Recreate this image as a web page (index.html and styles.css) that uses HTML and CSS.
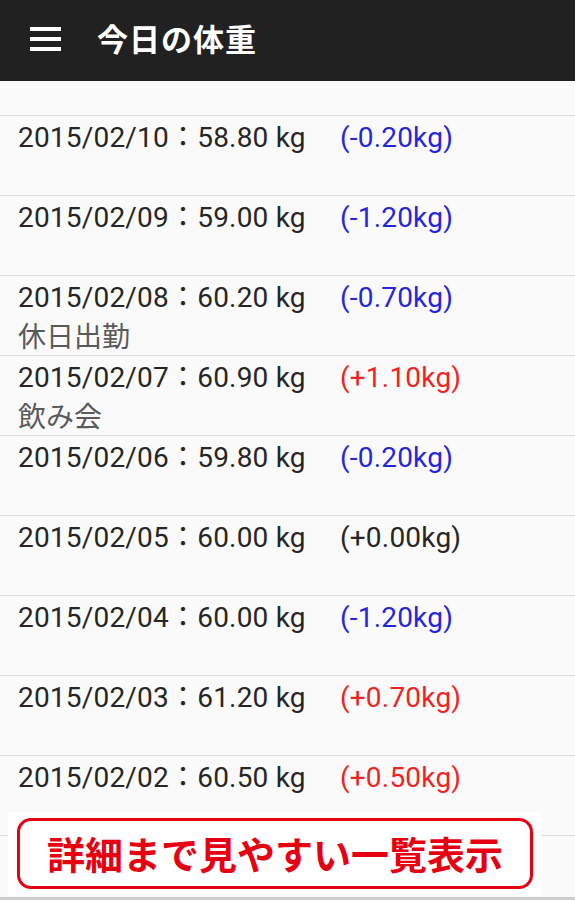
FILE: index.html
```html
<!DOCTYPE html>
<html lang="ja">
<head>
    <meta charset="UTF-8">
    <meta name="viewport" content="width=device-width, initial-scale=1.0">
    <title>今日の体重</title>
    <link rel="stylesheet" href="styles.css">
</head>
<body>
    <header class="appbar">
        <svg class="menu-icon" width="31" height="24" viewBox="0 0 31 24">
            <rect x="0" y="0" width="31" height="4" fill="#fff"/>
            <rect x="0" y="10" width="31" height="4" fill="#fff"/>
            <rect x="0" y="20" width="31" height="4" fill="#fff"/>
        </svg>
        <h1 class="title">今日の体重</h1>
    </header>

    <div class="list-top"></div>
    <ul class="weights">
        <li class="row">
            <div class="line"><span class="weight">2015/02/10：58.80 kg</span><span class="diff down">(-0.20kg)</span></div>
        </li>
        <li class="row">
            <div class="line"><span class="weight">2015/02/09：59.00 kg</span><span class="diff down">(-1.20kg)</span></div>
        </li>
        <li class="row">
            <div class="line"><span class="weight">2015/02/08：60.20 kg</span><span class="diff down">(-0.70kg)</span></div>
            <div class="memo">休日出勤</div>
        </li>
        <li class="row">
            <div class="line"><span class="weight">2015/02/07：60.90 kg</span><span class="diff up">(+1.10kg)</span></div>
            <div class="memo">飲み会</div>
        </li>
        <li class="row">
            <div class="line"><span class="weight">2015/02/06：59.80 kg</span><span class="diff down">(-0.20kg)</span></div>
        </li>
        <li class="row">
            <div class="line"><span class="weight">2015/02/05：60.00 kg</span><span class="diff">(+0.00kg)</span></div>
        </li>
        <li class="row">
            <div class="line"><span class="weight">2015/02/04：60.00 kg</span><span class="diff down">(-1.20kg)</span></div>
        </li>
        <li class="row">
            <div class="line"><span class="weight">2015/02/03：61.20 kg</span><span class="diff up">(+0.70kg)</span></div>
        </li>
        <li class="row">
            <div class="line"><span class="weight">2015/02/02：60.50 kg</span><span class="diff up">(+0.50kg)</span></div>
        </li>
        <li class="row"></li>
    </ul>

    <!-- promo caption laid over the list -->
    <div class="promo">
        <div class="promo-box">詳細まで見やすい一覧表示</div>
    </div>
    <div class="bottom-line"></div>
</body>
</html>
```

FILE: styles.css
```css
* {
    margin: 0;
    padding: 0;
    box-sizing: border-box;
}

html, body {
    height: 900px;
    overflow: hidden;
}

body {
    position: relative;
    background-color: #fafafa;
    font-family: Roboto, "Noto Sans CJK JP", sans-serif;
    color: #222;
}

.appbar {
    height: 81px;
    background-color: #212121;
    display: flex;
    align-items: center;
    padding-left: 30px;
}

.menu-icon {
    display: block;
    margin-top: -3px;
}

.title {
    margin-left: 36px;
    font-size: 31px;
    font-weight: 700;
    letter-spacing: 1px;
    color: #fff;
    font-family: "Noto Sans CJK JP", sans-serif;
    margin-top: -6px;
}

.list-top {
    height: 34px;
}

.weights {
    list-style: none;
}

.row {
    height: 80px;
    border-top: 1px solid #dcdcdc;
    padding: 2px 0 0 18px;
    font-size: 28px;
    line-height: 40px;
}

.line {
    display: flex;
    white-space: nowrap;
    letter-spacing: 0.2px;
}

.weight {
    width: 322px;
    color: #262626;
}

.diff {
    color: #262626;
}

.diff.down {
    color: #2626dd;
}

.diff.up {
    color: #ee2525;
}

.memo {
    color: #5a5a5a;
    margin-top: 0;
}

.promo {
    position: absolute;
    left: 8px;
    top: 812px;
    width: 533px;
    height: 84px;
    background-color: #fff;
    padding: 6px 0 0 9px;
}

.promo-box {
    width: 516px;
    height: 71px;
    border: 3.5px solid #e60012;
    border-radius: 14px;
    display: flex;
    align-items: center;
    justify-content: center;
    color: #e60012;
    font-family: "Noto Sans CJK JP", sans-serif;
    font-weight: 700;
    font-size: 38px;
    padding-bottom: 2px;
}

.bottom-line {
    position: absolute;
    left: 0;
    top: 897px;
    width: 100%;
    height: 3px;
    background-color: #cfcfcf;
}
```
